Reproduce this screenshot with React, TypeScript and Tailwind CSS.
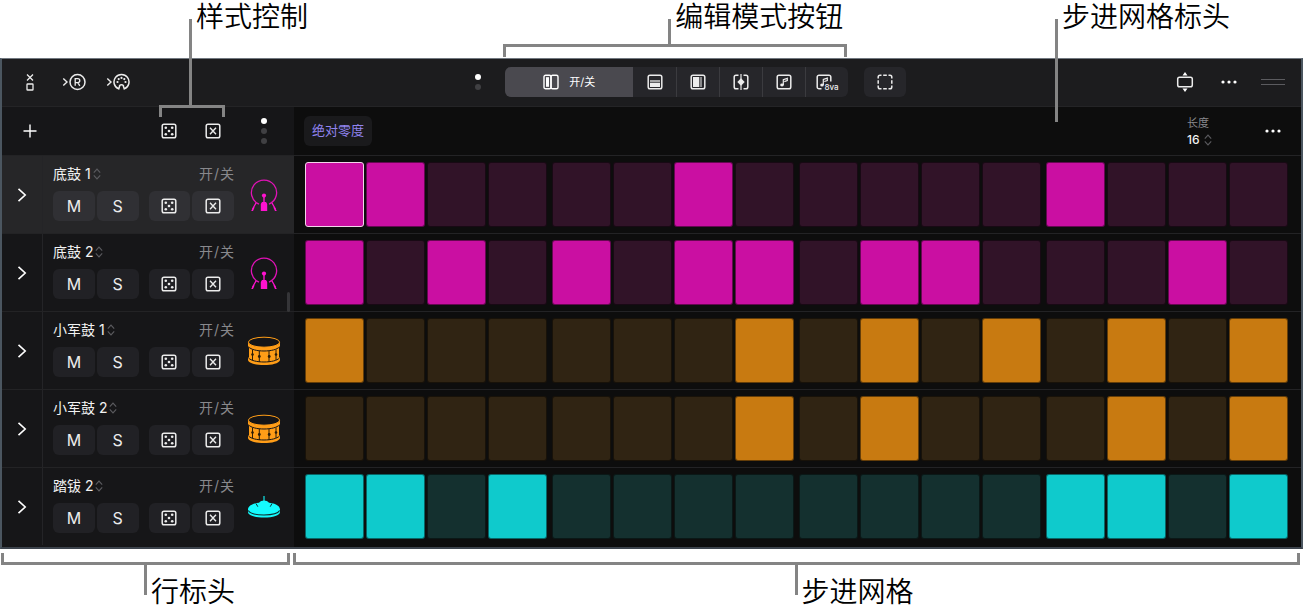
import type { ReactNode } from "react";

type Tone = "magenta" | "orange" | "cyan";
type Drum = "kick" | "snare" | "cymbal";

interface Row {
  name: string;
  tone: Tone;
  drum: Drum;
  steps: string;
  selected?: boolean;
}

const rows: Row[] = [
  { name: "底鼓 1", tone: "magenta", drum: "kick", steps: "xx....x.....x...", selected: true },
  { name: "底鼓 2", tone: "magenta", drum: "kick", steps: "x.x.x.xx.xx...x." },
  { name: "小军鼓 1", tone: "orange", drum: "snare", steps: "x......x.x.x.x.x" },
  { name: "小军鼓 2", tone: "orange", drum: "snare", steps: ".......x.x...x.x" },
  { name: "踏钹 2", tone: "cyan", drum: "cymbal", steps: "xx.x........xx.x" },
];

const onColor: Record<Tone, string> = {
  magenta: "bg-[#ca0fa2]",
  orange: "bg-[#c87a11]",
  cyan: "bg-[#0fcacc]",
};
const offColor: Record<Tone, string> = {
  magenta: "bg-[#311328]",
  orange: "bg-[#302413]",
  cyan: "bg-[#14302f]",
};

function Svg({ w, h, children }: { w: number; h: number; children: ReactNode }) {
  return (
    <svg width={w} height={h} viewBox={`0 0 ${w} ${h}`} fill="none" stroke="currentColor" strokeWidth="1.4" className="block shrink-0" aria-hidden="true">
      {children}
    </svg>
  );
}

const Dice = () => (
  <Svg w={16} h={16}>
    <rect x="1.2" y="1.2" width="13.6" height="13.6" rx="1.8" strokeWidth="1.5" />
    <g fill="currentColor" stroke="none">
      <circle cx="4.8" cy="4.8" r="1.3" />
      <circle cx="11.2" cy="4.8" r="1.3" />
      <circle cx="8" cy="8" r="1.3" />
      <circle cx="4.8" cy="11.2" r="1.3" />
      <circle cx="11.2" cy="11.2" r="1.3" />
    </g>
  </Svg>
);

const BoxX = () => (
  <Svg w={16} h={16}>
    <rect x="1.2" y="1.2" width="13.6" height="13.6" rx="1.8" strokeWidth="1.5" />
    <path d="M5 4.8l6 6.4M11 4.8l-6 6.4" />
  </Svg>
);

const UpDown = () => (
  <Svg w={8} h={12}>
    <path d="M0.8 4.600L4 1.100l3.200 3.500M0.8 7.400l3.200 3.500 3.200-3.500" stroke="#5b5b5f" strokeWidth="1.1" />
  </Svg>
);

const Ellipsis = () => (
  <Svg w={16} h={4}>
    <g fill="#fff" stroke="none">
      <circle cx="2" cy="2" r="1.6" />
      <circle cx="8" cy="2" r="1.6" />
      <circle cx="14" cy="2" r="1.6" />
    </g>
  </Svg>
);

const Kick = () => (
  <svg width="28" height="32" viewBox="0 0 28 32" fill="none" className="block text-[#ff12cf]" aria-hidden="true">
    <path d="M9 25.2A12.6 12.6 0 1 1 19 25.2" stroke="#e012b6" strokeWidth="1.3" />
    <path d="M14 16v8" stroke="currentColor" strokeWidth="1.4" />
    <circle cx="14" cy="16.6" r="2.1" fill="currentColor" />
    <path d="M12 23h4l1.2 2v7h-6.4v-7z" fill="currentColor" />
    <path d="M6 24l-3.4 6M22 24l3.4 6" stroke="currentColor" strokeWidth="1.3" />
    <path d="M3.4 27.8l1.2.8-1.6 3.4H1.2zM24.6 27.8l-1.2.8 1.6 3.4h1.8z" fill="currentColor" />
  </svg>
);

const Snare = () => (
  <svg width="34" height="30" viewBox="0 0 34 30" fill="none" className="block" aria-hidden="true">
    <path d="M1 6v4.5l1 1V21l-1 1v2.2C2 27.400 9 29 17 29s15-1.600 16-4.800V22l-1-1v-9.500l1-1V6z" fill="#ff9d17" />
    <ellipse cx="17" cy="6.200" rx="15.600" ry="5" fill="#151517" stroke="#ff9d17" strokeWidth="1" />
    <path d="M1.500 10.800C4 13.600 10 15 17 15s13-1.400 15.500-4.200M1.500 22C4 24.600 10 26 17 26s13-1.400 15.500-4" stroke="#151517" strokeWidth="1" />
    <path d="M5.500 13.500v11M12.300 15v11M22 15v11M29 13.500v10.500" stroke="#2a1c08" strokeWidth="1" />
    <g fill="#2a1c08">
      <circle cx="5.500" cy="18.500" r="1.300" />
      <circle cx="12.300" cy="20.500" r="1.400" />
      <circle cx="22.200" cy="20.500" r="1.400" />
      <circle cx="29" cy="18.500" r="1.300" />
    </g>
  </svg>
);

const Cymbal = () => (
  <svg width="34" height="24" viewBox="0 0 34 24" fill="none" className="block" aria-hidden="true">
    <path d="M17 1v7" stroke="#12e8ea" strokeWidth="1.200" />
    <path d="M1 14.500C1 10 8 8.200 12 7.800c1.300-1.600 3-2.300 5-2.300s3.700.7 5 2.300c4 .4 11 2.200 11 6.700v2.500c0 3.500-7 5.500-16 5.500S1 20.500 1 17z" fill="#15fbfd" />
    <path d="M1.300 15.600C3 18.800 9.500 20 17 20s14-1.200 15.700-4.400" stroke="#0d2c2d" strokeWidth="1.100" />
    <path d="M9 8.500l1.800 3.200M25 8.500l-1.800 3.200" stroke="#0d2c2d" strokeWidth="1" />
  </svg>
);

const drums: Record<Drum, () => ReactNode> = { kick: Kick, snare: Snare, cymbal: Cymbal };

const Note = () => (
  <>
    <path d="M7.300 11V5.800l4-1.400v2.200l-3 1" strokeWidth="1.200" />
    <ellipse cx="6" cy="11" rx="1.800" ry="1.400" fill="currentColor" stroke="none" />
  </>
);

const modes: { label: string; icon: ReactNode }[] = [
  {
    label: "力度",
    icon: (
      <Svg w={16} h={16}>
        <rect x="1.200" y="1.200" width="13.600" height="13.600" rx="1.800" strokeWidth="1.500" />
        <path d="M3 7h10" strokeWidth="1.300" />
        <path d="M3 8.700h10V13H3z" fill="currentColor" stroke="none" />
      </Svg>
    ),
  },
  {
    label: "门",
    icon: (
      <Svg w={16} h={16}>
        <rect x="1.200" y="1.200" width="13.600" height="13.600" rx="1.800" strokeWidth="1.500" />
        <path d="M3 3h6.300v10H3z" fill="currentColor" stroke="none" />
        <path d="M11 3v10" strokeWidth="1" />
      </Svg>
    ),
  },
  {
    label: "偏移",
    icon: (
      <Svg w={16} h={16}>
        <path d="M5.500 1.200H3A1.800 1.800 0 0 0 1.200 3v10A1.800 1.800 0 0 0 3 14.800h2.500M10.500 1.200H13A1.800 1.800 0 0 1 14.800 3v10a1.800 1.800 0 0 1-1.800 1.800h-2.500" strokeWidth="1.500" />
        <path d="M8 0v16" strokeWidth="1.200" />
        <path d="M8 4.300l3.700 3.700L8 11.700 4.300 8z" fill="currentColor" stroke="none" />
      </Svg>
    ),
  },
  {
    label: "音符",
    icon: (
      <Svg w={16} h={16}>
        <rect x="1.200" y="1.200" width="13.600" height="13.600" rx="1.800" strokeWidth="1.500" />
        <Note />
      </Svg>
    ),
  },
];

function Chevron() {
  return (
    <Svg w={10} h={16}>
      <path d="M1.500 1.800L8.200 8l-6.700 6.200" stroke="#fff" strokeWidth="1.600" />
    </Svg>
  );
}

function Dots({ count }: { count: number }) {
  return (
    <div className="flex flex-col gap-[4px]">
      {Array.from({ length: count }, (_, i) => (
        <span key={i} className={i === 0 ? "size-[6px] rounded-full bg-white" : "size-[6px] rounded-full bg-[#404043]"} />
      ))}
    </div>
  );
}

const labelClass = "text-[28px] leading-[28px] font-[350] whitespace-nowrap text-black";

function StepRow({ row }: { row: Row }) {
  const DrumIcon = drums[row.drum];
  const pad = row.selected
    ? "flex h-[30px] flex-1 items-center justify-center rounded-[6px] bg-[#303034]"
    : "flex h-[30px] flex-1 items-center justify-center rounded-[6px] bg-[#212125]";
  return (
    <div className="flex h-[78px] border-t border-[#232325]">
      <div className={row.selected ? "flex w-[292px] shrink-0 bg-[#262628]" : "flex w-[292px] shrink-0 bg-[#161618]"}>
        <button aria-label={`展开 ${row.name}`} className="flex w-[41px] items-center justify-center border-r border-[#242427]">
          <Chevron />
        </button>
        <div className="flex flex-1 flex-col gap-[7px] pt-[8px] pl-[10px] text-[14px]">
          <div className="flex h-5 items-center justify-between">
            <button className="flex items-center gap-[2px] leading-5 text-[#f2f2f2]">
              {row.name}
              <UpDown />
            </button>
            <span className="flex gap-[1px] leading-5 text-[#88888c]">
              <span>开</span>
              <span>/</span>
              <span>关</span>
            </span>
          </div>
          <div className="flex gap-[10px] text-[16px] text-[#ececec]">
            <div className="flex flex-1 gap-[2px]">
              <button className={pad}>M</button>
              <button className={pad}>S</button>
            </div>
            <div className="flex flex-1 gap-[2px]">
              <button className={pad} aria-label="随机化">
                <Dice />
              </button>
              <button className={pad} aria-label="清除">
                <BoxX />
              </button>
            </div>
          </div>
        </div>
        <div className="flex w-[60px] items-center justify-center">
          <DrumIcon />
        </div>
      </div>
      <div className="flex flex-1 gap-[5px] pt-[6px] pr-[13px] pb-[6px] pl-[11px]">
        {[0, 1, 2, 3].map((beat) => (
          <div key={beat} className="flex flex-1 gap-[2px]">
            {row.steps
              .slice(beat * 4, beat * 4 + 4)
              .split("")
              .map((s, i) => {
                const on = s === "x";
                const current = row.selected && beat === 0 && i === 0;
                return (
                  <button
                    key={i}
                    aria-label={`${row.name} 步 ${beat * 4 + i + 1}`}
                    aria-pressed={on}
                    className={`flex-1 rounded-[3px] border ${current ? "border-[#f3d3ea]" : "border-black/50"} ${on ? onColor[row.tone] : offColor[row.tone]}`}
                  />
                );
              })}
          </div>
        ))}
      </div>
    </div>
  );
}

export default function App() {
  return (
    <div className="bg-white pt-[58px] font-['Inter','Noto_Sans_CJK_SC',sans-serif]">
      <main className="relative mr-[3px] border-x-2 border-t border-b-2 border-x-[#4b5660] border-t-[#717880] border-b-[#3c434c] bg-[#0d0d0d]">
        <header className="flex h-[47px] items-center bg-[#1c1c1e] pb-px text-[#ececec]">
          <div className="flex flex-[10] items-center">
            <button aria-label="单行模式" className="flex w-[56px] justify-center">
              <Svg w={10} h={18}>
                <path d="M2 1.500l6 6M8 1.500l-6 6" strokeWidth="1.300" />
                <rect x="2" y="11" width="6" height="6" rx="0.600" strokeWidth="1.300" />
              </Svg>
            </button>
            <div className="flex gap-5 pl-1">
              <button aria-label="录音">
                <Svg w={24} h={18}>
                  <path d="M1.300 5.500L5 9l-3.700 3.500" />
                  <circle cx="15.500" cy="9" r="7.500" strokeWidth="1.500" />
                  <path d="M13.200 12.800V5.600h2.600a2 2 0 0 1 0 4h-2.600M15.800 9.600l2 3.200" strokeWidth="1.300" />
                </Svg>
              </button>
              <button aria-label="调色板">
                <Svg w={24} h={18}>
                  <path d="M1.300 5.500L5 9l-3.700 3.500" />
                  <path d="M12.700 15.900A7.500 7.500 0 1 1 18.300 15.900L17.600 13.900a2.100 2.100 0 0 0-4.200 0z" strokeWidth="1.500" />
                  <g fill="currentColor" stroke="none">
                    <circle cx="11.500" cy="9" r="1.100" />
                    <circle cx="12.700" cy="6.100" r="1.100" />
                    <circle cx="15.500" cy="4.900" r="1.100" />
                    <circle cx="18.300" cy="6.100" r="1.100" />
                    <circle cx="19.500" cy="9" r="1.100" />
                  </g>
                </Svg>
              </button>
            </div>
          </div>
          <Dots count={2} />
          <div className="relative ml-6 flex h-[30px] rounded-[6px] bg-[#26262a]">
            <button aria-pressed="true" className="flex w-[128px] items-center justify-center gap-[10px] rounded-l-[6px] bg-[#4a494f] text-[11px] text-white">
              <Svg w={16} h={16}>
                <rect x="1" y="1.200" width="7" height="13.600" rx="1.600" />
                <rect x="8" y="1.200" width="7" height="13.600" rx="1.600" />
                <path d="M3 3.200h3v9.600H3z" fill="currentColor" stroke="none" />
              </Svg>
              开/关
            </button>
            {modes.map((m, i) => (
              <button
                key={m.label}
                aria-label={m.label}
                className={i === 0 ? "flex w-[43px] items-center justify-center" : "flex w-[43px] items-center justify-center border-l border-[#3b3b3f]"}
              >
                {m.icon}
              </button>
            ))}
            <button aria-label="八度音程" className="flex w-[43px] items-center justify-center border-l border-[#3b3b3f]">
              <svg width="24" height="18" viewBox="0 0 24 18" fill="none" stroke="currentColor" aria-hidden="true">
                <path d="M6.500 15.800H4a1.800 1.800 0 0 1-1.800-1.800V4A1.800 1.800 0 0 1 4 2.200h10A1.800 1.800 0 0 1 15.800 4v4.500" strokeWidth="1.500" />
                <path d="M8.300 12V6.500l4-1.300v2.300l-3 1" strokeWidth="1.200" />
                <ellipse cx="7" cy="12" rx="1.800" ry="1.500" fill="currentColor" stroke="none" />
                <text x="9.500" y="17" fontSize="8" fontWeight="500" fill="currentColor" stroke="none">8va</text>
              </svg>
            </button>
            <div className="pointer-events-none absolute top-[-64px] right-[1px] left-[-2px]">
              <div className="flex items-start gap-[4px] pl-[165px]">
                <span className="mt-4 h-[25px] w-[3px] shrink-0 bg-[#848484]" />
                <span className={labelClass}>编辑模式按钮</span>
              </div>
              <div className="h-[13px] border-x-[3px] border-t-[3px] border-[#848484]" />
            </div>
          </div>
          <button aria-label="选择步骤" className="ml-4 flex h-[30px] w-[42px] items-center justify-center rounded-[6px] bg-[#26262a]">
            <Svg w={16} h={16}>
              <path d="M1.200 4.500V3A1.800 1.800 0 0 1 3 1.200h1.500M11.500 1.200H13A1.800 1.800 0 0 1 14.800 3v1.500M14.800 11.500V13a1.800 1.800 0 0 1-1.800 1.800h-1.500M4.500 14.800H3A1.800 1.800 0 0 1 1.200 13v-1.500M6.200 1.200h3.600M6.200 14.800h3.600M1.200 6.200v3.600M14.800 6.200v3.600" strokeWidth="1.500" />
            </Svg>
          </button>
          <div className="flex flex-[8] items-center justify-end gap-5 pr-4">
            <button aria-label="调整高度" className="flex w-6 justify-center">
              <Svg w={18} h={20}>
                <rect x="1.700" y="5.200" width="14.600" height="9.600" rx="1.800" strokeWidth="1.500" />
                <path d="M9 0l2.500 3.400h-5zM9 20l2.500-3.400h-5z" fill="#fff" stroke="none" />
              </Svg>
            </button>
            <button aria-label="更多" className="flex w-6 justify-center">
              <Ellipsis />
            </button>
            <span className="h-[6px] w-6 border-y border-[#5b5b5f]" />
          </div>
        </header>

        <div className="flex h-[49px] border-t border-[#242426]">
          <div className="flex w-[292px] shrink-0 items-center bg-[#161618] text-[#ececec]">
            <button aria-label="添加行" className="flex w-[56px] justify-center">
              <Svg w={14} h={14}>
                <path d="M7 0.500v13M0.500 7h13" stroke="#fff" strokeWidth="1.400" />
              </Svg>
            </button>
            <div className="relative ml-auto flex gap-[2px]">
              <button aria-label="随机化样式" className="flex w-[42px] justify-center">
                <Dice />
              </button>
              <button aria-label="清除样式" className="flex w-[42px] justify-center">
                <BoxX />
              </button>
              <div className="pointer-events-none absolute top-[-120px] right-[9px] left-[11px]">
                <div className="flex items-start gap-[4px] pl-[30px]">
                  <span className="mt-4 h-[86px] w-[3px] shrink-0 bg-[#848484]" />
                  <span className={labelClass}>样式控制</span>
                </div>
                <div className="h-[12px] border-x-[3px] border-t-[3px] border-[#848484]" />
              </div>
            </div>
            <div className="flex w-[60px] justify-center">
              <Dots count={3} />
            </div>
          </div>
          <div className="relative flex flex-1 items-center pr-4 pl-[10px]">
            <button className="h-[30px] rounded-[6px] bg-[#1a1a1c] px-2 text-[13px] text-[#9184f0]">绝对零度</button>
            <div className="mr-[49px] ml-auto flex w-[25px] flex-col pt-[2px]">
              <span className="text-[11px] leading-4 whitespace-nowrap text-[#88888c]">长度</span>
              <button className="flex items-center gap-1 text-[12px] leading-[18px] font-medium text-[#f2f2f2]">
                16
                <UpDown />
              </button>
            </div>
            <button aria-label="样式更多" className="flex w-6 justify-center">
              <Ellipsis />
            </button>
            <div className="pointer-events-none absolute top-[-104px] right-[243px] flex w-[3px] items-start gap-[4px]">
              <span className="mt-4 h-[103px] w-[3px] shrink-0 bg-[#848484]" />
              <span className={labelClass}>步进网格标头</span>
            </div>
          </div>
        </div>

        <div className="relative bg-[linear-gradient(to_right,#161618_292px,#0d0d0d_292px)] pb-[2px]">
          {rows.map((row) => (
            <StepRow key={row.name} row={row} />
          ))}
          <span className="absolute top-[137px] left-[285px] h-[20px] w-[3px] rounded-full bg-[#353538]" />
        </div>
      </main>

      <footer className="flex gap-[3px] pt-[4px] pr-[6px] pl-[1px]">
        <div className="w-[289px] shrink-0">
          <div className="h-[12px] border-x-[3px] border-b-[3px] border-[#848484]" />
          <div className="flex items-start gap-[4px] pl-[143px]">
            <span className="h-[30px] w-[3px] shrink-0 bg-[#848484]" />
            <span className={`${labelClass} mt-[13px]`}>行标头</span>
          </div>
        </div>
        <div className="flex-1">
          <div className="h-[12px] border-x-[3px] border-b-[3px] border-[#848484]" />
          <div className="flex items-start gap-[4px] pl-[calc(50%-2px)]">
            <span className="h-[30px] w-[3px] shrink-0 bg-[#848484]" />
            <span className={`${labelClass} mt-[13px]`}>步进网格</span>
          </div>
        </div>
      </footer>
    </div>
  );
}
